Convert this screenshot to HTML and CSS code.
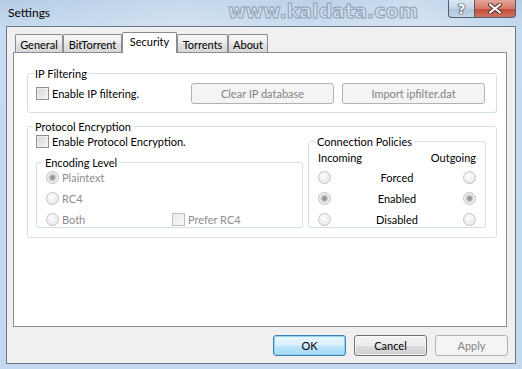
FILE: index.html
```html
<!DOCTYPE html>
<html lang="en">
<head>
    <meta charset="UTF-8">
    <meta name="viewport" content="width=device-width, initial-scale=1.0">
    <title>Settings</title>
    <link rel="stylesheet" href="styles.css">
</head>
<body>
    <div class="window">
        <div class="titlebar">
            <span class="title">Settings</span>
            <span class="watermark">www.kaldata.com</span>
            <div class="caption-btns">
                <span class="cap help">?</span>
                <span class="cap close">
                    <svg width="14" height="11" viewBox="0 0 14 11">
                        <path d="M2 1.5 L12 9.5 M12 1.5 L2 9.5" stroke="#4a3030" stroke-width="4" stroke-linecap="round"/>
                        <path d="M2 1.5 L12 9.5 M12 1.5 L2 9.5" stroke="#fff" stroke-width="2.2" stroke-linecap="round"/>
                    </svg>
                </span>
            </div>
        </div>

        <div class="client">
            <div class="tabs">
                <span class="tab" style="width:48px">General</span>
                <span class="tab" style="width:59px">BitTorrent</span>
                <span class="tab active" style="width:55px">Security</span>
                <span class="tab" style="width:51px">Torrents</span>
                <span class="tab" style="width:40px">About</span>
            </div>

            <div class="panel">
                <fieldset class="group ip">
                    <legend>IP Filtering</legend>
                    <div class="ip-row">
                        <label class="check"><span class="box"></span>Enable IP filtering.</label>
                        <button class="btn wide first" disabled>Clear IP database</button>
                        <button class="btn wide" disabled>Import ipfilter.dat</button>
                    </div>
                </fieldset>

                <fieldset class="group proto">
                    <legend>Protocol Encryption</legend>
                    <div class="proto-body">
                        <div class="proto-left">
                            <label class="check"><span class="box"></span>Enable Protocol Encryption.</label>
                            <fieldset class="group enc">
                                <legend>Encoding Level</legend>
                                <div class="opts">
                                    <div class="opt off"><span class="radio on"></span>Plaintext</div>
                                    <div class="opt off"><span class="radio"></span>RC4</div>
                                    <div class="opt off">
                                        <span class="opt-both"><span class="radio"></span>Both</span>
                                        <span class="box dim"></span>Prefer RC4
                                    </div>
                                </div>
                            </fieldset>
                        </div>

                        <fieldset class="group policies">
                            <legend>Connection Policies</legend>
                            <div class="pol-head"><span>Incoming</span><span>Outgoing</span></div>
                            <div class="pol-rows">
                                <span class="radio"></span><span>Forced</span><span class="radio"></span>
                                <span class="radio on"></span><span>Enabled</span><span class="radio on"></span>
                                <span class="radio"></span><span>Disabled</span><span class="radio"></span>
                            </div>
                        </fieldset>
                    </div>
                </fieldset>
            </div>

            <div class="actions">
                <button class="btn default">OK</button>
                <button class="btn">Cancel</button>
                <button class="btn" disabled>Apply</button>
            </div>
        </div>
    </div>
</body>
</html>
```
FILE: styles.css
```css
body {
    margin: 0;
    font-family: Lato, "Liberation Sans", sans-serif;
    font-size: 11px;
    color: #000;
}
.window {
    position: relative;
    width: 522px;
    height: 369px;
    box-sizing: border-box;
    padding: 0 6px 5px 6px;
    display: flex;
    flex-direction: column;
    background: linear-gradient(to bottom, #b4cce6 0, #c6dbef 30px, #c2d8ee 100%);
}
.titlebar {
    height: 26px;
    display: flex;
    align-items: flex-start;
    background: linear-gradient(to right, rgba(255,255,255,0) 0, rgba(255,255,255,0.25) 35%, rgba(255,255,255,0.1) 60%, rgba(255,255,255,0.3) 80%, rgba(255,255,255,0) 100%);
    margin: 0 -6px;
    padding: 0 6px;
}
.title {
    padding: 5px 0 0 2px;
    line-height: 15px;
    font-size: 12px;
}
.watermark {
    position: absolute;
    left: 228px;
    top: 0;
    font-family: "DejaVu Sans", sans-serif;
    font-weight: bold;
    font-size: 19px;
    line-height: 22px;
    color: #d3e0ee;
    -webkit-text-stroke: 1px #8c9fb5;
}

/* caption buttons */
.caption-btns {
    margin-left: auto;
    display: flex;
}
.cap {
    height: 18px;
    box-sizing: border-box;
    border: 1px solid #4f5f73;
    border-top: none;
    display: flex;
    align-items: center;
    justify-content: center;
}
.help {
    width: 26px;
    border-right: none;
    border-radius: 0 0 0 4px;
    background: linear-gradient(#dbe6f2, #c5d5e6 50%, #aec3da 51%, #c4d6ea);
    font-family: "DejaVu Sans", sans-serif;
    font-weight: bold;
    font-size: 14px;
    line-height: 16px;
    color: #fff;
    text-shadow: 0 0 1px #2c3a4a, 0 0 1px #2c3a4a, 0 0 1px #2c3a4a, 0 0 1px #2c3a4a;
}
.close {
    width: 42px;
    border-radius: 0 0 4px 0;
    background: linear-gradient(#e6a598, #d47a69 50%, #c04a36 51%, #d27260);
}

/* client area */
.client {
    flex: 1;
    border: 1px solid #6d7886;
    background: #f0f0f0;
    padding: 0 8px 0 6px;
    display: flex;
    flex-direction: column;
}
.tabs {
    height: 25px;
    display: flex;
    align-items: flex-end;
    margin-left: 2px;
}
.tab {
    height: 18px;
    box-sizing: border-box;
    border: 1px solid #898c95;
    border-bottom: none;
    border-radius: 2px 2px 0 0;
    padding-top: 2px;
    line-height: 15px;
    text-align: center;
    background: linear-gradient(#f6f6f6, #ececec 45%, #e0e0e0 55%, #d8d8d8);
}
.tab.active {
    height: 21px;
    margin-bottom: -1px;
    padding-top: 1px;
    background: #fff;
    position: relative;
    z-index: 1;
}
.panel {
    height: 275px;
    box-sizing: border-box;
    border: 1px solid #898c95;
    background: #fff;
    padding: 13px 9px 0 13px;
}

/* group boxes */
.group {
    margin: 0;
    min-width: 0;
    border: 1px solid #d5dfe5;
    border-radius: 3px;
}
.group legend {
    padding: 0 2px;
    margin-left: -3px;
    line-height: 15px;
}
.ip {
    padding: 2px 11px 8px 8px;
}
.ip-row {
    display: flex;
    align-items: center;
    gap: 8px;
}
.first {
    margin-left: auto;
}
.proto {
    margin-top: 6px;
    padding: 0 10px 9px 8px;
}
.proto-body {
    display: flex;
    gap: 5px;
}
.proto-left {
    width: 267px;
    display: flex;
    flex-direction: column;
}
.enc {
    flex: 1;
    margin-top: 6px;
    padding: 0 8px 0 9px;
}
.policies {
    width: 178px;
    box-sizing: border-box;
    padding: 1px 9px 0 9px;
}

/* checkboxes and radios */
.check {
    display: flex;
    align-items: center;
    line-height: 15px;
}
.box {
    width: 13px;
    height: 13px;
    box-sizing: border-box;
    flex: none;
    border: 1px solid #8e8f8f;
    box-shadow: inset 0 0 0 1px #f3f3f3;
    background: linear-gradient(135deg, #cfd2d6, #f8f8f8);
    margin-right: 3px;
}
.box.dim {
    border-color: #bdbdbd;
    background: linear-gradient(135deg, #e6e6e6, #fafafa);
}
.radio {
    width: 13px;
    height: 13px;
    box-sizing: border-box;
    flex: none;
    border: 1px solid #c2c2c2;
    border-radius: 50%;
    background: radial-gradient(circle at 40% 35%, #fdfdfd, #e4e4e4);
}
.radio.on {
    background: radial-gradient(circle, #8e8e8e 0, #9f9f9f 2px, #c9c9c9 3px, #e4e4e4 4px, #f4f4f4 5.5px);
}
.opts {
    display: flex;
    flex-direction: column;
    gap: 6px;
}
.opt {
    display: flex;
    align-items: center;
    line-height: 15px;
}
.opt .radio {
    margin-right: 3px;
}
.off {
    color: #8d8d8d;
}
.opt-both {
    width: 126px;
    display: flex;
    align-items: center;
}
.pol-head {
    display: flex;
    justify-content: space-between;
    line-height: 15px;
}
.pol-rows {
    margin-top: 5px;
    display: grid;
    grid-template-columns: 13px 1fr 13px;
    row-gap: 6px;
    align-items: center;
    line-height: 15px;
    text-align: center;
}

/* buttons */
.btn {
    width: 73px;
    height: 21px;
    padding: 0;
    font: inherit;
    color: #000;
    border: 1px solid #707070;
    border-radius: 3px;
    background: linear-gradient(#f2f2f2, #ebebeb 50%, #dddddd 51%, #cfcfcf);
    box-shadow: inset 0 0 0 1px rgba(255,255,255,0.7);
}
.btn.wide {
    width: 143px;
}
.btn:disabled {
    color: #838383;
    border-color: #adb2b5;
    background: #f4f4f4;
    box-shadow: none;
}
.btn.default {
    border-color: #3c7fb1;
    background: linear-gradient(#eaf6fd, #d9f0fc 50%, #bee6fd 51%, #a7d9f5);
    box-shadow: inset 0 0 0 1px #8fd3f5;
}
.actions {
    display: flex;
    justify-content: flex-end;
    gap: 8px;
    margin: 8px -1px 0 0;
}
```
